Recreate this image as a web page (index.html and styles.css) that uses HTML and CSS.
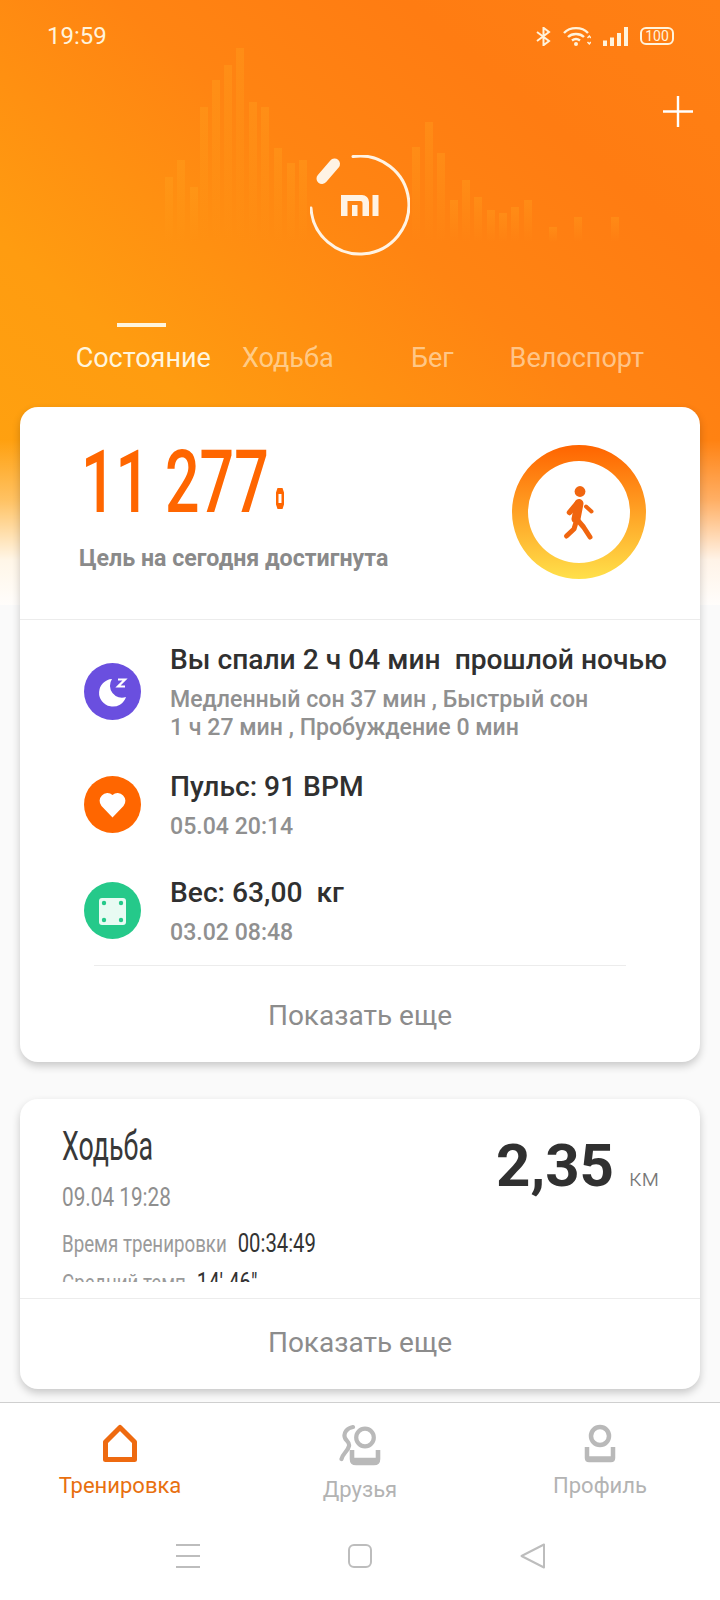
FILE: index.html
```html
<!DOCTYPE html>
<html>
	<head>
		<meta charset="UTF-8">
		<title>Тренировка</title>
		<link rel="stylesheet" href="styles.css">
	</head>
	<body>
		<div class="page">
			<!-- activity chart behind the header -->
			<svg class="bars" width="720" height="250" viewBox="0 0 720 250">
				<defs>
					<linearGradient id="barFill" x1="0" y1="0" x2="0" y2="1">
						<stop offset="0" stop-color="#ffa820" stop-opacity=".3"/>
						<stop offset=".6" stop-color="#ffa820" stop-opacity=".12"/>
						<stop offset="1" stop-color="#ffa820" stop-opacity="0"/>
					</linearGradient>
				</defs>
				<g fill="url(#barFill)">
					<rect x="165" y="177" width="8" height="65"/>
					<rect x="177" y="160" width="8" height="82"/>
					<rect x="190" y="187" width="8" height="55"/>
					<rect x="200" y="107" width="8" height="135"/>
					<rect x="212" y="80" width="8" height="162"/>
					<rect x="224" y="65" width="8" height="177"/>
					<rect x="236" y="48" width="8" height="194"/>
					<rect x="249" y="102" width="8" height="140"/>
					<rect x="261" y="107" width="8" height="135"/>
					<rect x="274" y="148" width="8" height="94"/>
					<rect x="287" y="163" width="8" height="79"/>
					<rect x="299" y="160" width="8" height="82"/>
					<rect x="412" y="147" width="8" height="95"/>
					<rect x="425" y="122" width="8" height="120"/>
					<rect x="437" y="153" width="8" height="89"/>
					<rect x="450" y="200" width="8" height="42"/>
					<rect x="462" y="180" width="8" height="62"/>
					<rect x="474" y="197" width="8" height="45"/>
					<rect x="487" y="210" width="8" height="32"/>
					<rect x="499" y="213" width="8" height="29"/>
					<rect x="511" y="207" width="8" height="35"/>
					<rect x="524" y="200" width="8" height="42"/>
					<rect x="549" y="227" width="8" height="15"/>
					<rect x="574" y="217" width="8" height="25"/>
					<rect x="611" y="217" width="8" height="25"/>
				</g>
			</svg>

			<div class="status">
				<span class="time">19:59</span>
				<div class="status-icons">
					<svg width="15" height="19" viewBox="0 0 15 19" fill="none" stroke="#fff3dc" stroke-width="2">
						<path d="M1 5l12 9-5.500 4.200V.8L13 5 1 14"/>
					</svg>
					<svg width="28" height="20" viewBox="0 0 28 20" fill="none" stroke="#fff3dc" stroke-width="2.400">
						<path d="M1 7c6-6.500 18-6.500 24 0"/>
						<path d="M5 11c4-4 12-4 16 0"/>
						<path d="M9 14.500c2.500-2 5.500-2 8 0"/>
						<circle cx="13" cy="18" r="2" fill="#fff3dc" stroke="none"/>
						<path d="M24.500 12l1.800-2 1.500 2M24.500 16l1.800 2 1.500-2" stroke-width="1.400"/>
					</svg>
					<svg width="25" height="19" viewBox="0 0 25 19" fill="#fff3dc">
						<rect x="0" y="13.500" width="4" height="5.500"/>
						<rect x="7" y="10.500" width="4" height="8.500"/>
						<rect x="14" y="6" width="4" height="13"/>
						<rect x="21" y="0" width="4" height="19"/>
					</svg>
					<span class="battery">100</span>
				</div>
			</div>

			<div class="add-row">
				<svg width="30" height="31" viewBox="0 0 30 31" stroke="#fff" stroke-width="2.400">
					<path d="M15 0v31M0 15.500h30"/>
				</svg>
			</div>

			<div class="logo">
				<svg width="100" height="101" viewBox="0 0 100 101" fill="none">
					<path d="M43 1.500A49 49 0 1 1 1 53" stroke="#fff3e4" stroke-width="3" stroke-linecap="round"/>
					<path d="M12 23.500L24.500 9" stroke="#fff3e4" stroke-width="11" stroke-linecap="round"/>
					<path d="M31 40H52a7 7 0 0 1 7 7V61H52.500V48a2 2 0 0 0-2-2H37.500V61H31zM42 50h5.500v11H42zM62.500 40H68.500V61H62.500z" fill="#fff3e4"/>
				</svg>
			</div>

			<div class="tabs">
				<div class="tab tab-active"><i class="tab-mark"></i>Состояние</div>
				<div class="tab">Ходьба</div>
				<div class="tab">Бег</div>
				<div class="tab">Велоспорт</div>
			</div>

			<div class="card card-today">
				<div class="today">
					<div class="today-left">
						<div class="steps">
							<span class="steps-num">11 277</span>
							<svg class="steps-unit" width="8" height="21" viewBox="0 0 8 21">
								<path fill-rule="evenodd" d="M1.500 0h5L8 4.500v12L6.500 21h-5L0 16.500v-12zM2.500 6v9h3V6z" fill="#ff6600"/>
							</svg>
						</div>
						<div class="today-note">Цель на сегодня достигнута</div>
					</div>
					<svg class="ring" width="134" height="134" viewBox="0 0 134 134">
						<defs>
							<linearGradient id="ringFill" x1="0" y1="0" x2="0" y2="1">
								<stop offset="0" stop-color="#ff6400"/>
								<stop offset="1" stop-color="#ffe04a"/>
							</linearGradient>
						</defs>
						<path fill="url(#ringFill)" fill-rule="evenodd" d="M67 0a67 67 0 1 0 0 134a67 67 0 1 0 0-134zM67 16a51 51 0 1 1 0 102a51 51 0 1 1 0-102z"/>
						<g fill="none" stroke="#f0650f" stroke-linecap="round" stroke-linejoin="round">
							<circle cx="68" cy="46.500" r="5.400" fill="#f0650f" stroke="none"/>
							<path d="M67 58.500l-3 15.500" stroke-width="9"/>
							<path d="M65 58.500l-7.500 9" stroke-width="5.500"/>
							<path d="M74 61.500l5.500 5" stroke-width="4"/>
							<path d="M65.500 75l6 7L78 92" stroke-width="5"/>
							<path d="M63.500 79l-1.500 5L54.500 91" stroke-width="5"/>
						</g>
					</svg>
				</div>

				<div class="rows">
					<div class="row row-sleep">
						<svg class="round-icon" width="57" height="57" viewBox="0 0 57 57">
							<circle cx="28.500" cy="28.500" r="28.500" fill="#6a4fdf"/>
							<path d="M28 16a13.800 13.800 0 1 0 14 18a12 12 0 0 1-14-18z" fill="#fff"/>
							<path d="M34 16.500h7l-7 7h7" fill="none" stroke="#fff" stroke-width="2.200"/>
						</svg>
						<div class="row-text">
							<div class="row-title">Вы спали 2 ч 04 мин&nbsp; прошлой ночью</div>
							<div class="row-sub">Медленный сон 37 мин , Быстрый сон<br>1 ч 27 мин , Пробуждение 0 мин</div>
						</div>
					</div>
					<div class="row row-pulse">
						<svg class="round-icon" width="57" height="57" viewBox="0 0 57 57">
							<circle cx="28.500" cy="28.500" r="28.500" fill="#ff6600"/>
							<path d="M28.500 41.500L17.500 30a7.800 7.800 0 0 1 11-11a7.800 7.800 0 0 1 11 11z" fill="#fff"/>
						</svg>
						<div class="row-text">
							<div class="row-title">Пульс: 91 BPM</div>
							<div class="row-sub">05.04 20:14</div>
						</div>
					</div>
					<div class="row">
						<svg class="round-icon" width="57" height="57" viewBox="0 0 57 57">
							<circle cx="28.500" cy="28.500" r="28.500" fill="#25c98a"/>
							<rect x="15" y="16" width="27" height="27" rx="3" fill="#e8fbf3"/>
							<g fill="#25c98a">
								<circle cx="20" cy="21" r="2.200"/>
								<circle cx="37" cy="21" r="2.200"/>
								<circle cx="20" cy="38" r="2.200"/>
								<circle cx="37" cy="38" r="2.200"/>
							</g>
						</svg>
						<div class="row-text">
							<div class="row-title">Вес: 63,00&nbsp; кг</div>
							<div class="row-sub">03.02 08:48</div>
						</div>
					</div>
				</div>
				<div class="inner-line"></div>
				<div class="more">Показать еще</div>
			</div>

			<div class="card card-walk">
				<div class="walk">
					<div class="walk-left">
						<div class="narrow walk-name">Ходьба</div>
						<div class="narrow walk-date">09.04 19:28</div>
						<div class="walk-stats">
							<div class="narrow stat">Время тренировки<b>00:34:49</b></div>
							<div class="narrow stat">Средний темп<b>14' 46"</b></div>
						</div>
					</div>
					<div class="walk-dist">
						<span class="dist-num">2,35</span>
						<span class="dist-unit">км</span>
					</div>
				</div>
				<div class="more more-walk">Показать еще</div>
			</div>

			<div class="bottom">
				<div class="nav">
					<div class="nav-item nav-on">
						<svg width="38" height="40" viewBox="0 0 38 40" fill="none" stroke="#ee6a10" stroke-width="5" stroke-linejoin="round">
							<path d="M19 3.500L33.500 18v17.500h-29V18z"/>
						</svg>
						<span class="nav-label">Тренировка</span>
					</div>
					<div class="nav-item nav-mid">
						<svg width="42" height="42" viewBox="0 0 42 42" fill="none" stroke="#b9b9b9" stroke-width="4.200">
							<circle cx="26" cy="13.500" r="8.800"/>
							<path d="M14 3C8 4 4 9 6 14c1 3 5 4 4 8c-1 5-6 7-7.500 13" stroke-linecap="round"/>
							<path d="M13 26v9q0 4 4 4h18q4 0 4-4v-9" stroke-width="4.600"/>
							<path d="M14 36.500h24" stroke-width="5.500"/>
						</svg>
						<span class="nav-label">Друзья</span>
					</div>
					<div class="nav-item">
						<svg width="38" height="40" viewBox="0 0 38 40" fill="none" stroke="#b9b9b9" stroke-width="4.500">
							<circle cx="19" cy="12" r="9"/>
							<path d="M6 23v11q0 2 2 2h22q2 0 2-2V23"/>
							<path d="M6 35h26" stroke-width="5.500"/>
						</svg>
						<span class="nav-label">Профиль</span>
					</div>
				</div>
				<div class="sysbar">
					<svg width="24" height="24" viewBox="0 0 24 24" stroke="#bdbdbd" stroke-width="2">
						<path d="M0 1h24M0 12h24M0 23h24"/>
					</svg>
					<svg width="24" height="24" viewBox="0 0 24 24" fill="none" stroke="#bdbdbd" stroke-width="2">
						<rect x="1" y="1" width="22" height="22" rx="5"/>
					</svg>
					<svg width="25" height="26" viewBox="0 0 25 26" fill="none" stroke="#bdbdbd" stroke-width="2" stroke-linejoin="round">
						<path d="M24 1.500v23L1.500 13z"/>
					</svg>
				</div>
			</div>
		</div>
	</body>
</html>
```

FILE: styles.css
```css
body{
	margin: 0;
	background: #fafafa;
	font-family: Roboto, "Liberation Sans", sans-serif;
}
.page{
	position: relative;
	z-index: 0;
	width: 720px;
	height: 1600px;
	overflow: hidden;
	display: flex;
	flex-direction: column;
	background:
		linear-gradient(180deg, rgba(255,255,255,0) 440px, rgba(255,255,255,.35) 500px, rgba(255,255,255,.9) 560px, #fffdfb 605px) no-repeat,
		linear-gradient(40deg, #ffa40f 0%, #ff9c10 30%, #ff8412 58%, #ff7c12 78%, #ff8014 100%) no-repeat,
		#fafafa;
	background-size: 720px 605px, 720px 605px, auto;
}
.bars{
	position: absolute;
	left: 0;
	top: 0;
	z-index: -1;
}

/* status bar */
.status{
	display: flex;
	justify-content: space-between;
	align-items: center;
	height: 24px;
	margin-top: 24px;
	padding: 0 46px 0 47px;
	color: #fff3dc;
}
.time{
	font-size: 24px;
}
.status-icons{
	display: flex;
	align-items: center;
	gap: 12px;
}
.battery{
	width: 34px;
	height: 18px;
	box-sizing: border-box;
	border: 2px solid #fff3dc;
	border-radius: 6px;
	font-size: 14px;
	line-height: 14px;
	text-align: center;
}

.add-row{
	display: flex;
	justify-content: flex-end;
	height: 31px;
	margin-top: 48px;
	padding-right: 27px;
}
.logo{
	display: flex;
	justify-content: center;
	margin-top: 28px;
}

/* tabs */
.tabs{
	display: grid;
	grid-template-columns: repeat(4, 144.5px);
	align-items: end;
	height: 52px;
	margin-top: 67px;
	padding-left: 71px;
}
.tab{
	font-size: 27px;
	line-height: 34px;
	text-align: center;
	white-space: nowrap;
	color: rgba(255,240,215,.62);
}
.tab-active{
	color: #fff5dd;
}
.tab-mark{
	display: block;
	width: 49px;
	height: 4px;
	margin: 0 auto 14px;
	position: relative;
	left: -2px;
	background: #fff5dd;
}

/* cards */
.card{
	margin: 0 20px;
	background: #fff;
	border-radius: 18px;
	box-shadow: 0 4px 8px rgba(0,0,0,.2);
}
.card-today{
	margin-top: 32px;
	height: 655px;
}
.card-walk{
	margin-top: 37px;
	height: 290px;
}
.today{
	display: flex;
	justify-content: space-between;
	align-items: flex-start;
	height: 213px;
	box-sizing: border-box;
	padding: 30px 54px 0 59px;
	border-bottom: 1px solid #ececec;
}
.steps{
	display: flex;
	align-items: flex-end;
	height: 90px;
}
.steps-num{
	display: block;
	width: 195px;
	margin-left: 2px;
	font-size: 88px;
	font-weight: 500;
	line-height: 90px;
	white-space: nowrap;
	color: #ff6600;
	transform: scaleX(.69);
	transform-origin: left;
}
.steps-unit{
	margin-bottom: 18px;
}
.today-note{
	margin-top: 17px;
	font-size: 23.2px;
	font-weight: 700;
	line-height: 28px;
	color: #8a8a8a;
}
.ring{
	margin-top: 8px;
}

.rows{
	padding: 23px 0 0 64px;
}
.row{
	display: flex;
	align-items: center;
	gap: 29px;
}
.row-sleep{
	margin-bottom: 28px;
}
.row-pulse{
	margin-bottom: 35px;
}
.round-icon{
	flex: none;
	margin-top: -3px;
}
.row-title{
	font-size: 28.2px;
	font-weight: 500;
	line-height: 34px;
	white-space: nowrap;
	color: #303030;
}
.row-sub{
	margin-top: 9px;
	font-size: 23.1px;
	font-weight: 500;
	line-height: 28px;
	white-space: nowrap;
	color: #909090;
}
.inner-line{
	height: 1px;
	margin: 18px 74px 0;
	background: #ececec;
}
.more{
	height: 98px;
	display: flex;
	align-items: center;
	justify-content: center;
	font-size: 28px;
	color: #8c8c8c;
}
.more-walk{
	height: 86px;
	padding-bottom: 4px;
	border-top: 1px solid #ececec;
}

/* walk card */
.walk{
	display: flex;
	justify-content: space-between;
	align-items: flex-start;
	height: 199px;
	box-sizing: border-box;
	padding: 24px 41px 0 42px;
}
.narrow{
	white-space: nowrap;
	transform-origin: left;
}
.walk-name{
	font-size: 40px;
	line-height: 48px;
	color: #383838;
	transform: scaleX(.67);
}
.walk-date{
	margin-top: 11px;
	font-size: 25px;
	line-height: 32px;
	color: #8f8f8f;
	transform: scaleX(.83);
}
.walk-stats{
	height: 54px;
	margin-top: 14px;
	overflow: hidden;
}
.stat{
	margin-bottom: 8px;
	font-size: 24px;
	line-height: 30px;
	color: #9a9a9a;
	transform: scaleX(.78);
}
.stat b{
	margin-left: 14px;
	font-size: 26px;
	font-weight: 400;
	color: #333;
}
.walk-dist{
	display: flex;
	align-items: baseline;
	gap: 15px;
	padding-top: 8px;
}
.dist-num{
	font-size: 60px;
	font-weight: 700;
	line-height: 70px;
	color: #303030;
}
.dist-unit{
	font-size: 24px;
	font-weight: 300;
	color: #777;
}

/* bottom navigation */
.bottom{
	flex: 1;
	margin-top: 13px;
	background: #fff;
	border-top: 1px solid #cfcfcf;
}
.nav{
	display: grid;
	grid-template-columns: repeat(3, 240px);
	height: 117px;
	box-sizing: border-box;
	padding-top: 21px;
}
.nav-item{
	display: flex;
	flex-direction: column;
	align-items: center;
}
.nav-label{
	margin-top: 8px;
	font-size: 22px;
	line-height: 28px;
	color: #b3b3b3;
}
.nav-on .nav-label{
	color: #e8700f;
}
.nav-mid .nav-label{
	margin-top: 10px;
}
.sysbar{
	display: flex;
	justify-content: center;
	align-items: center;
	gap: 148px;
	padding-top: 23px;
}
```
